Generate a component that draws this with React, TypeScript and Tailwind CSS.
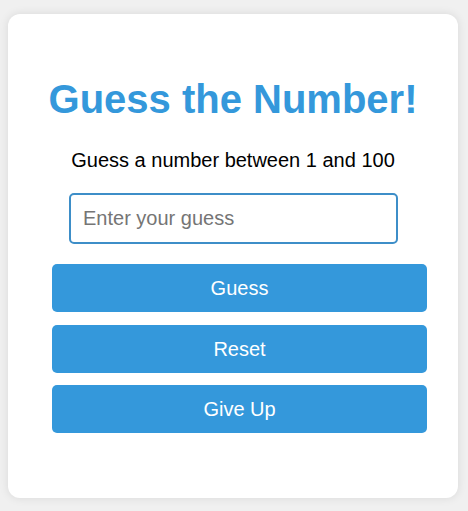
import { useState } from "react";

export default function App() {
  const [guess, setGuess] = useState("");

  return (
    <div className="min-h-[511px] bg-[#f0f0f0] pt-[14px] px-[8px] font-['Liberation_Sans',Arial,sans-serif]">
      <div className="w-[450px] h-[484px] bg-white rounded-[12px] shadow-[0_0_10px_rgba(0,0,0,0.1)] pt-[63px] flex flex-col">
        <h1 className="text-center text-[40px] font-bold text-[#3498db] leading-[45px]">
          Guess the Number!
        </h1>
        <p className="text-center text-[20px] text-black leading-[23px] mt-[27px]">
          Guess a number between 1 and 100
        </p>
        <input
          type="number"
          value={guess}
          onChange={(e) => setGuess(e.target.value)}
          placeholder="Enter your guess"
          className="mt-[21px] ml-[61px] w-[329px] h-[51px] px-[12px] border-2 border-[#3d8ec8] rounded-[5px] text-[20px] placeholder:text-[#757575] outline-none"
        />
        <div className="mt-[20px] ml-[44px] w-[375px] flex flex-col gap-[12.5px]">
          <button className="h-[48px] bg-[#3498db] text-white text-[20px] rounded-[5px]">
            Guess
          </button>
          <button className="h-[48px] bg-[#3498db] text-white text-[20px] rounded-[5px]">
            Reset
          </button>
          <button className="h-[48px] bg-[#3498db] text-white text-[20px] rounded-[5px]">
            Give Up
          </button>
        </div>
      </div>
    </div>
  );
}
